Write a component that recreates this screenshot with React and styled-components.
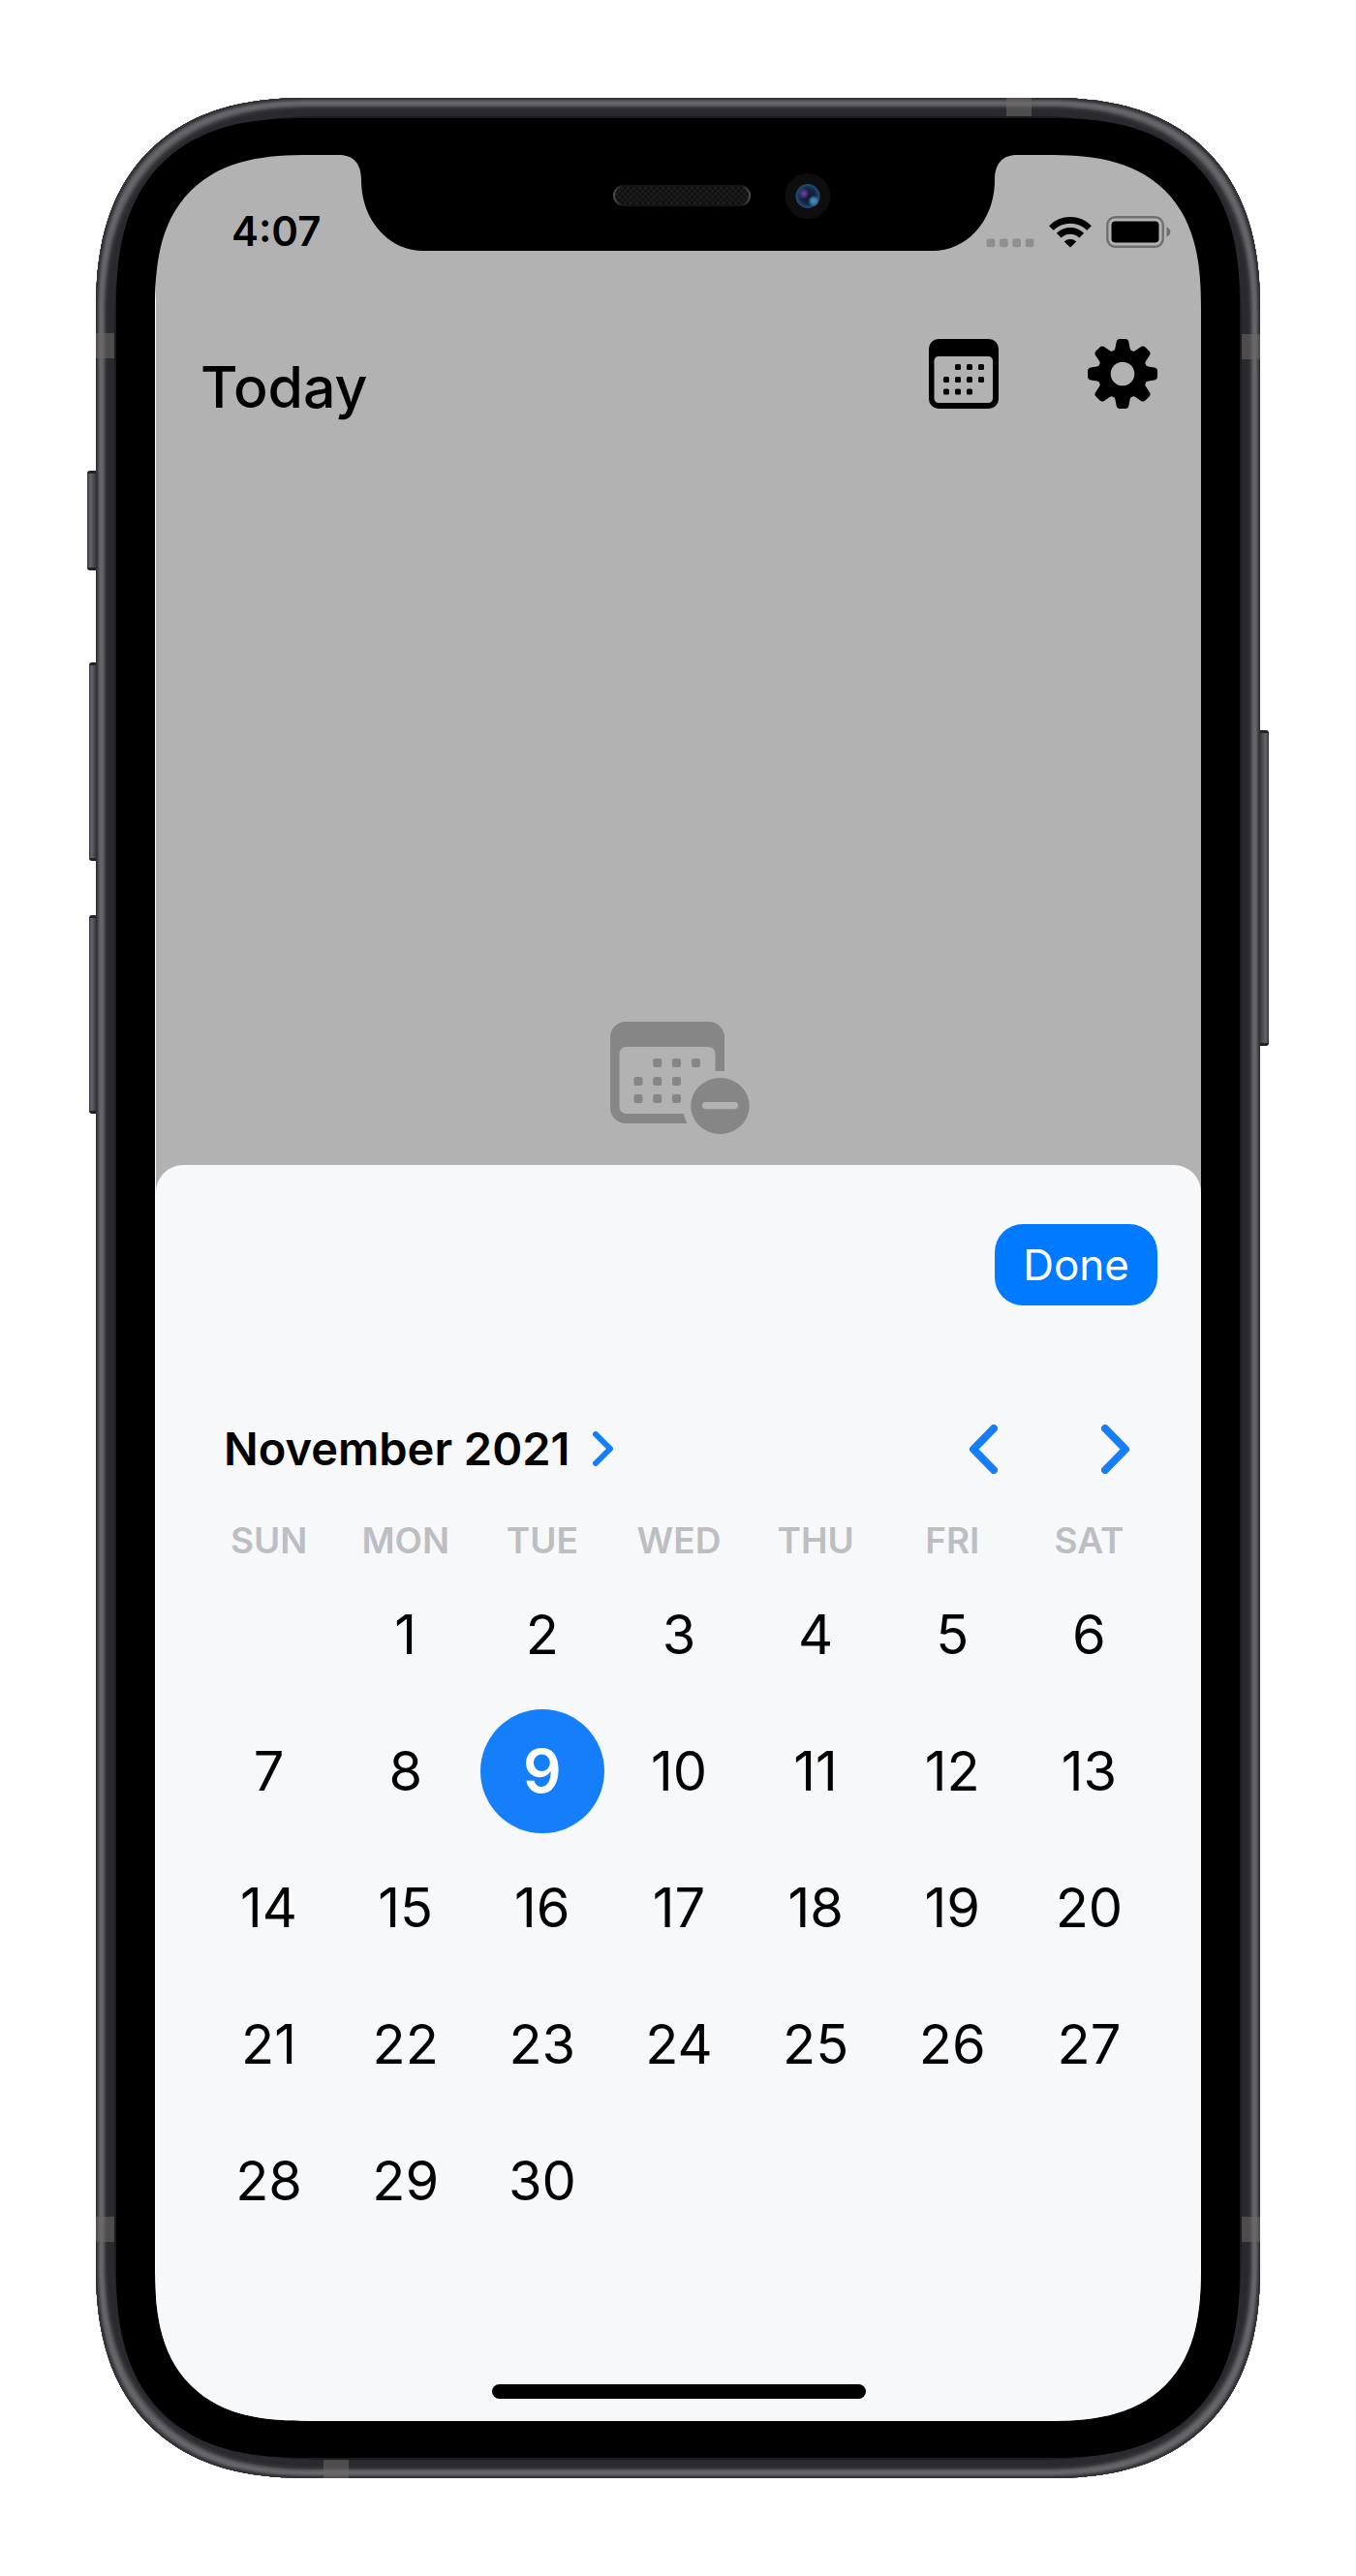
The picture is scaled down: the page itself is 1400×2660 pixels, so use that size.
import React from "react";
import styled, { createGlobalStyle } from "styled-components";

const GlobalStyle = createGlobalStyle`
  * { box-sizing: border-box; }
  body {
    margin: 0;
    background: #fff;
    color: #000;
    font-family: Inter, "Liberation Sans", sans-serif;
  }
  button { font: inherit; color: inherit; background: none; border: 0; padding: 0; cursor: pointer; }
  svg { display: block; }
`;

const Page = styled.main`
  padding: 101px 99px;
`;

const Device = styled.div`
  position: relative;
  min-width: 900px;
`;

const Frame = styled.div`
  padding: 21px;
  border-radius: 188px;
  background: #26262b;
  box-shadow:
    inset 0 0 0 1px #2e2f31,
    inset 0 0 0 2px #3a3a3e,
    inset 0 0 0 3px #4a4a4f,
    inset 0 0 0 4px #58585d,
    inset 0 0 0 7px #646469,
    inset 0 0 0 8px #5b5b60,
    inset 0 0 0 9px #505055,
    inset 0 0 0 10px #414146,
    inset 0 0 0 12px #313136,
    inset 0 0 0 19px #29292e,
    inset 0 0 0 21px #1b1b20;
  @supports (corner-shape: squircle) {
    border-radius: 220px;
    corner-shape: superellipse(1.27);
  }
`;

const Bezel = styled.div`
  padding: 38px 40px;
  border-radius: 162px;
  background: #000;
  @supports (corner-shape: squircle) {
    border-radius: 195px;
    corner-shape: superellipse(1.33);
  }
`;

const Screen = styled.div`
  position: relative;
  overflow: hidden;
  padding-left: 1px;
  border-radius: 126px;
  background: linear-gradient(to right, #fff 1px, #b2b2b2 1px);
  @supports (corner-shape: squircle) {
    border-radius: 160px;
    corner-shape: superellipse(1.4);
  }
`;

const SideButton = styled.span`
  position: absolute;
  top: ${(p) => p.$top}px;
  ${(p) => p.$side}: -${(p) => p.$depth}px;
  width: ${(p) => p.$depth}px;
  height: ${(p) => p.$length}px;
  border: solid #222226;
  border-width: 3px 0;
  border-radius: ${(p) => (p.$side === "left" ? "3px 0 0 3px" : "0 3px 3px 0")};
  background: linear-gradient(
    to ${(p) => (p.$side === "left" ? "right" : "left")},
    #36363a, #65656b 35%, #54545a 60%, #3b3b41
  );
`;

const Band = styled.span`
  position: absolute;
  background: rgba(112, 106, 104, 0.55);
  ${(p) => p.$edge}: 0;
  ${(p) => p.$from}: ${(p) => p.$at}px;
  width: ${(p) => (p.$from === "left" || p.$from === "right" ? 26 : 19)}px;
  height: ${(p) => (p.$from === "left" || p.$from === "right" ? 19 : 26)}px;
`;

const NotchShape = styled.svg`
  position: absolute;
  top: 0;
  left: 50%;
  margin-left: -350px;
`;

const StatusBar = styled.div`
  display: flex;
  justify-content: space-between;
  align-items: center;
  padding: 55px 31px 0 78px;
`;

const Time = styled.time`
  font-size: 42px;
  line-height: 48px;
  font-weight: 600;
`;

const StatusIcons = styled.div`
  display: flex;
  align-items: flex-end;
  gap: 15px;
`;

const Header = styled.header`
  display: flex;
  justify-content: space-between;
  align-items: flex-end;
  padding: 87px 45px 0 46px;
`;

const Title = styled.h1`
  margin: 0;
  font-size: 59px;
  line-height: 44px;
  font-weight: 500;
`;

const HeaderActions = styled.div`
  display: flex;
  gap: 92px;
`;

const EmptyState = styled.div`
  display: flex;
  justify-content: center;
  padding: 633px 0 30px 2px;
  color: #868686;
`;

const Sheet = styled.section`
  padding: 61px 45px 23px 46px;
  border-radius: 28px 28px 0 0;
  background: #f7f8fa;
`;

const SheetActions = styled.div`
  display: flex;
  justify-content: flex-end;
`;

const DoneButton = styled.button`
  && {
    padding: 18px 29px;
    border-radius: 29px;
    background: #007aff;
    color: #fff;
    font-size: 44px;
    line-height: 48px;
    font-weight: 400;
  }
`;

const MonthBar = styled.div`
  display: flex;
  justify-content: space-between;
  align-items: center;
  padding: 115px 28px 36px 24px;
`;

const MonthButton = styled.button`
  && {
    display: flex;
    align-items: center;
    gap: 24px;
    font-size: 47px;
    line-height: 66px;
    font-weight: 600;
  }
`;

const MonthArrows = styled.div`
  display: flex;
  gap: 107px;
`;

const Calendar = styled.table`
  width: 100%;
  table-layout: fixed;
  border-collapse: collapse;
`;

const Weekday = styled.th`
  padding: 0;
  height: 52px;
  font-size: 37px;
  line-height: 52px;
  font-weight: 600;
  color: #bdbec2;
`;

const DayCell = styled.td`
  padding: 0;
  height: 141px;
  text-align: center;
`;

const DayButton = styled.button`
  && {
    display: block;
    width: 128px;
    height: 128px;
    margin: 0 auto;
    border-radius: 50%;
    font-size: ${(p) => (p.$selected ? 62 : 56)}px;
    line-height: 128px;
    font-weight: ${(p) => (p.$selected ? 600 : 400)};
    color: ${(p) => (p.$selected ? "#fff" : "#000")};
    background: ${(p) => (p.$selected ? "#157efb" : "transparent")};
  }
`;

const HomeIndicator = styled.div`
  width: 386px;
  height: 15px;
  margin: 140px auto 0;
  border-radius: 8px;
  background: #000;
`;

function Notch() {
  return (
    <NotchShape width="700" height="99" viewBox="0 0 700 99" aria-hidden="true">
      <defs>
        <pattern id="mesh" width="6" height="6" patternUnits="userSpaceOnUse">
          <rect width="6" height="6" fill="#111" />
          <path d="M0 0h3v3h-3zM3 3h3v3h-3z" fill="#1c1c1c" />
        </pattern>
        <linearGradient id="rim">
          <stop offset="0" stopColor="#4a4a4a" />
          <stop offset="0.06" stopColor="#151515" />
          <stop offset="0.94" stopColor="#151515" />
          <stop offset="1" stopColor="#4a4a4a" />
        </linearGradient>
        <radialGradient id="lens">
          <stop offset="0" stopColor="#10142b" />
          <stop offset="0.6" stopColor="#14233f" />
          <stop offset="1" stopColor="#24507c" />
        </radialGradient>
        <radialGradient id="violet">
          <stop offset="0" stopColor="#7048a8" />
          <stop offset="1" stopColor="#7048a8" stopOpacity="0" />
        </radialGradient>
        <radialGradient id="teal">
          <stop offset="0" stopColor="#4391b4" />
          <stop offset="0.4" stopColor="#3d84a8" />
          <stop offset="1" stopColor="#3d84a8" stopOpacity="0" />
        </radialGradient>
      </defs>
      <path d="M0 0C15 0 23 9 23 26C23 68 52 99 87 99H613C648 99 677 68 677 26C677 9 685 0 700 0Z" />
      <rect x="284" y="32" width="140" height="20" rx="10" fill="url(#mesh)" stroke="url(#rim)" strokeWidth="2" />
      <circle cx="484" cy="42.5" r="23.5" fill="#0e0e0e" />
      <circle cx="484" cy="42.5" r="12.5" fill="url(#lens)" />
      <circle cx="480" cy="40" r="6" fill="url(#violet)" />
      <circle cx="490" cy="47.5" r="6" fill="url(#teal)" />
    </NotchShape>
  );
}

const SignalIcon = () => (
  <svg width="50" height="32" viewBox="0 0 50 32" fill="#8f8f8f" aria-label="No signal">
    {[0, 13.4, 26.8, 40.2].map((x) => (
      <rect key={x} x={x + 0.5} y="22.5" width="8.8" height="8.8" rx="2.4" />
    ))}
  </svg>
);

const WifiIcon = () => (
  <svg width="44" height="32" viewBox="0 0 44 32" fill="none" stroke="#000" strokeWidth="6.6" aria-label="Wi-Fi">
    <path d="M2.4 11.5A27.8 27.8 0 0 1 41.6 11.5" />
    <path d="M10.2 19.2A16.8 16.8 0 0 1 33.8 19.2" />
    <path d="M22 31.6L15.7 25.4A9.4 9.4 0 0 1 28.3 25.4Z" fill="#000" stroke="none" />
  </svg>
);

const BatteryIcon = () => (
  <svg width="67" height="33" viewBox="0 0 67 33" aria-label="Battery full">
    <rect x="1.3" y="1.3" width="57.4" height="30.4" rx="8" fill="none" stroke="#6f6f6f" strokeWidth="2.4" />
    <rect x="5.5" y="5.5" width="49" height="22" rx="4" />
    <path d="M62.5 11.5C64.5 12 66.3 14 66.3 16.5S64.5 21 62.5 21.5Z" fill="#6f6f6f" />
  </svg>
);

const dots = (cols, rows, size, skip) =>
  rows.flatMap((y, r) =>
    cols.map((x, c) =>
      skip.includes(r * 4 + c) ? null : (
        <rect key={`${r}-${c}`} x={x} y={y} width={size} height={size} rx={size / 4} />
      )
    )
  );

const CalendarIcon = () => (
  <svg width="72" height="72" viewBox="0 0 72 72" aria-hidden="true">
    <path
      fillRule="evenodd"
      d="M10 0H62A10 10 0 0 1 72 10V62A10 10 0 0 1 62 72H10A10 10 0 0 1 0 62V10A10 10 0 0 1 10 0ZM10 18A4.5 4.5 0 0 0 5.5 22.5V61.5A4.5 4.5 0 0 0 10 66H61.5A4.5 4.5 0 0 0 66 61.5V22.5A4.5 4.5 0 0 0 61.5 18Z"
    />
    {dots([15, 27, 39, 51], [26, 39, 51.5], 6, [0, 11])}
  </svg>
);

const GearIcon = () => (
  <svg width="72" height="72" viewBox="0 0 72 72" aria-hidden="true">
    <mask id="hub">
      <rect width="72" height="72" fill="#fff" />
      <circle cx="36" cy="36" r="12.3" fill="#000" />
    </mask>
    <g mask="url(#hub)">
      <circle cx="36" cy="36" r="25.5" />
      {[0, 45, 90, 135, 180, 225, 270, 315].map((a) => (
        <path
          key={a}
          transform={`rotate(${a} 36 36)`}
          d="M25 13C27 12.5 28 11.5 28.4 9.5L29.6 3.2Q30.2 0 33.2 0H38.8Q41.8 0 42.4 3.2L43.6 9.5C44 11.5 45 12.5 47 13L42 24H30Z"
        />
      ))}
    </g>
  </svg>
);

const EmptyCalendarIcon = () => (
  <svg width="146" height="118" viewBox="0 0 146 118" fill="currentColor" aria-label="No events">
    <mask id="badge">
      <rect width="146" height="118" fill="#fff" />
      <path d="M108 51H146V118H88C84 112 79 104 77 96Z" fill="#000" />
    </mask>
    <g mask="url(#badge)">
      <path
        fillRule="evenodd"
        d="M17 0H103A16 16 0 0 1 119 16V89A16 16 0 0 1 103 105H17A16 16 0 0 1 1 89V16A16 16 0 0 1 17 0ZM17 26A7 7 0 0 0 10.5 33V88A7 7 0 0 0 17 95H103A7 7 0 0 0 109.5 88V33A7 7 0 0 0 103 26Z"
      />
    </g>
    {dots([25.5, 45.2, 65, 85], [38, 57, 75], 9, [0, 7, 11])}
    <path
      fillRule="evenodd"
      d="M114.5 58A30.2 29 0 1 1 114.4 58ZM99.5 83A3.6 3.6 0 0 0 99.5 90.2H129.5A3.6 3.6 0 0 0 129.5 83Z"
    />
  </svg>
);

const Chevron = ({ width, height, stroke, left }) => {
  const s = stroke / 2;
  const [a, b] = left ? [width - s, s + 1] : [s, width - s - 1];
  return (
    <svg width={width} height={height} viewBox={`0 0 ${width} ${height}`} aria-hidden="true">
      <path
        d={`M${a} ${s}L${b} ${height / 2}L${a} ${height - s}`}
        fill="none"
        stroke="#157efb"
        strokeWidth={stroke}
        strokeLinecap="round"
        strokeLinejoin="round"
      />
    </svg>
  );
};

const WEEKDAYS = ["SUN", "MON", "TUE", "WED", "THU", "FRI", "SAT"];
const FIRST_WEEKDAY = 1;
const DAYS_IN_MONTH = 30;
const WEEKS = Array.from({ length: 5 }, (_, week) =>
  WEEKDAYS.map((_, weekday) => {
    const day = week * 7 + weekday - FIRST_WEEKDAY + 1;
    return day >= 1 && day <= DAYS_IN_MONTH ? day : null;
  })
);

export default function App() {
  const [selected, setSelected] = React.useState(9);
  return (
    <Page>
      <GlobalStyle />
      <Device>
        <SideButton $side="left" $depth={9} $top={385} $length={103} />
        <SideButton $side="left" $depth={7} $top={583} $length={205} />
        <SideButton $side="left" $depth={7} $top={844} $length={205} />
        <SideButton $side="right" $depth={9} $top={653} $length={326} />
        <Frame>
          <Bezel>
            <Screen>
              <Notch />
              <StatusBar>
                <Time>4:07</Time>
                <StatusIcons>
                  <SignalIcon />
                  <WifiIcon />
                  <BatteryIcon />
                </StatusIcons>
              </StatusBar>
              <Header>
                <Title>Today</Title>
                <HeaderActions>
                  <button type="button" aria-label="Calendar"><CalendarIcon /></button>
                  <button type="button" aria-label="Settings"><GearIcon /></button>
                </HeaderActions>
              </Header>
              <EmptyState><EmptyCalendarIcon /></EmptyState>
              <Sheet>
                <SheetActions>
                  <DoneButton type="button">Done</DoneButton>
                </SheetActions>
                <MonthBar>
                  <MonthButton type="button">
                    November 2021
                    <Chevron width={22} height={36} stroke={6} />
                  </MonthButton>
                  <MonthArrows>
                    <button type="button" aria-label="Previous month">
                      <Chevron width={30} height={51} stroke={8} left />
                    </button>
                    <button type="button" aria-label="Next month">
                      <Chevron width={30} height={51} stroke={8} />
                    </button>
                  </MonthArrows>
                </MonthBar>
                <Calendar>
                  <thead>
                    <tr>
                      {WEEKDAYS.map((name) => (
                        <Weekday key={name} scope="col">{name}</Weekday>
                      ))}
                    </tr>
                  </thead>
                  <tbody>
                    {WEEKS.map((week, i) => (
                      <tr key={i}>
                        {week.map((day, j) => (
                          <DayCell key={j}>
                            {day && (
                              <DayButton
                                type="button"
                                $selected={day === selected}
                                aria-pressed={day === selected}
                                onClick={() => setSelected(day)}
                              >
                                {day}
                              </DayButton>
                            )}
                          </DayCell>
                        ))}
                      </tr>
                    ))}
                  </tbody>
                </Calendar>
                <HomeIndicator />
              </Sheet>
            </Screen>
          </Bezel>
        </Frame>
        <Band $edge="left" $from="top" $at={243} />
        <Band $edge="right" $from="top" $at={244} />
        <Band $edge="left" $from="bottom" $at={244} />
        <Band $edge="right" $from="bottom" $at={244} />
        <Band $edge="top" $from="right" $at={236} />
        <Band $edge="bottom" $from="left" $at={235} />
      </Device>
    </Page>
  );
}
